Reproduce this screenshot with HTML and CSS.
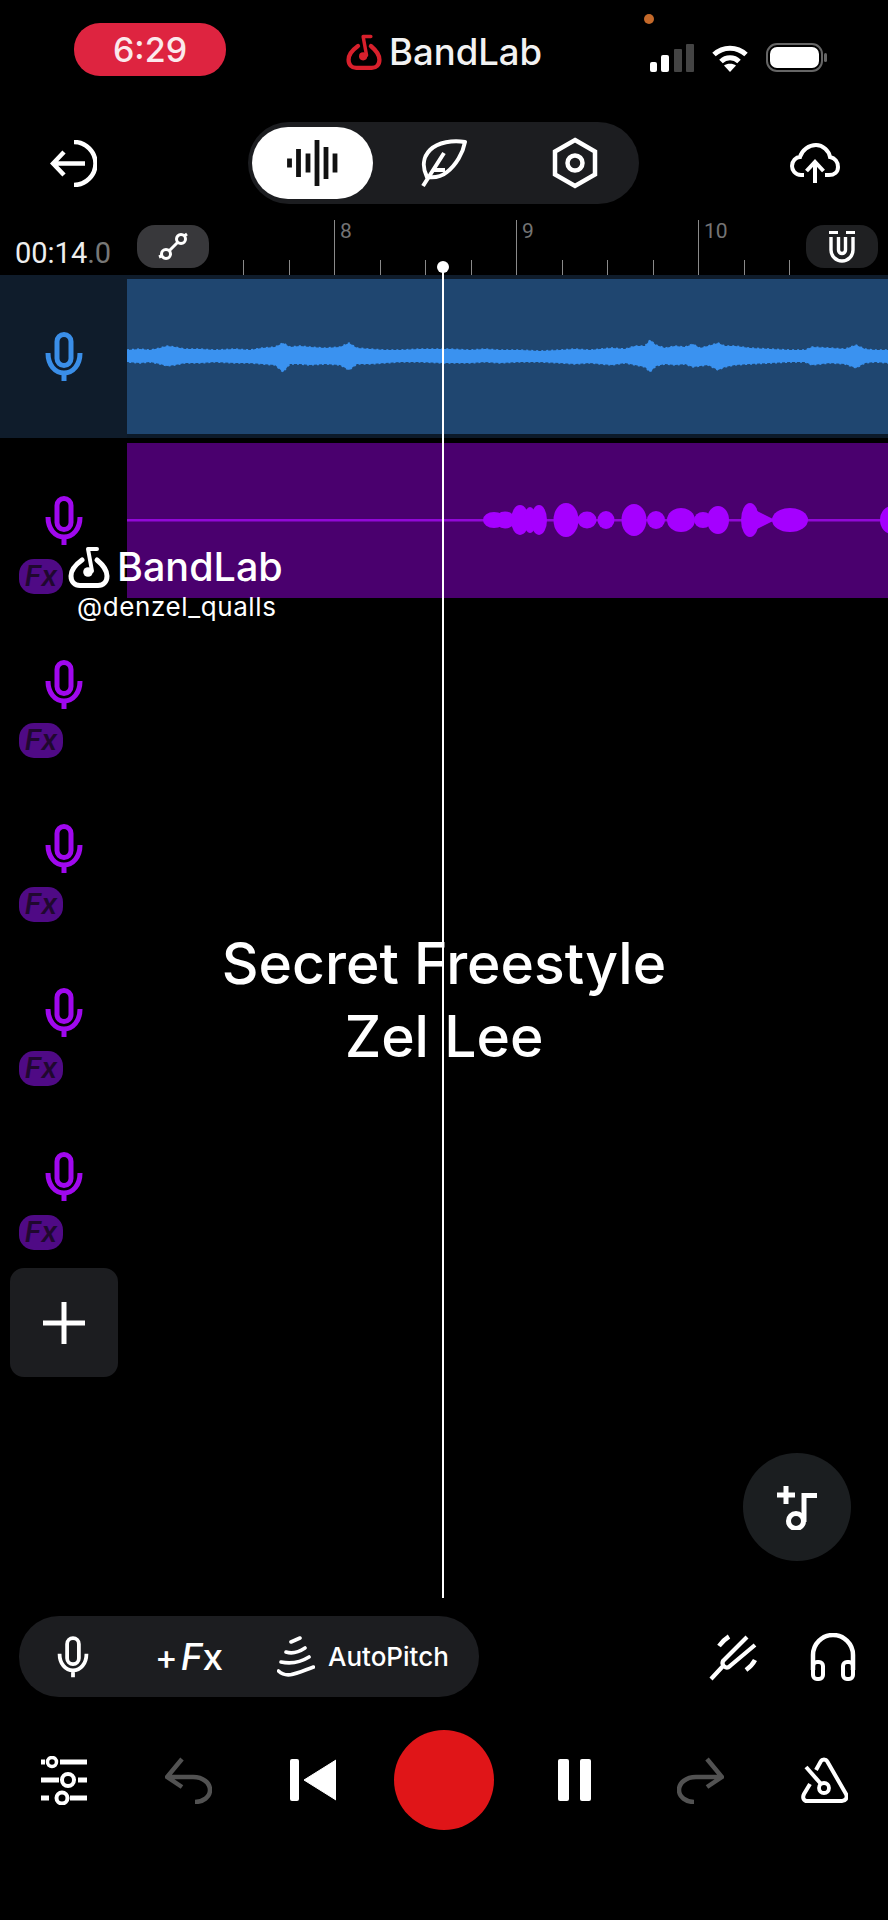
FILE: index.html
```html
<!DOCTYPE html>
<html lang="en">
<head>
  <meta charset="UTF-8">
  <title>BandLab Studio</title>
  <link rel="stylesheet" href="styles.css">
</head>
<body>
  <svg class="defs" width="0" height="0">
    <symbol id="mic" viewBox="0 0 38 50">
      <rect x="12" y="2.5" width="14" height="31" rx="7" fill="none" stroke="currentColor"/>
      <path d="M3 21C3 33 10 41 19 41C28 41 35 33 35 21M19 41V49" fill="none" stroke="currentColor"/>
    </symbol>
    <symbol id="logo" viewBox="0 0 42 42">
      <path d="M14 14C7 19 3 25 3 30C3 36 7 39.5 12 39.5H30C35 39.5 39 36 39 30C39 24 35 19 29 14" fill="none" stroke="currentColor" stroke-width="5" stroke-linecap="round"/>
      <path d="M20 3H29M20 3L24 25" fill="none" stroke="currentColor" stroke-width="4" stroke-linecap="round"/>
      <circle cx="20" cy="26" r="4.8" fill="currentColor"/>
    </symbol>
    <symbol id="undo" viewBox="0 0 47 47">
      <path d="M17 2L2 20L17 30M2 20H28C38 20 45 26 45 33C45 40 38 45 30 45" fill="none" stroke="currentColor" stroke-width="4.5"/>
    </symbol>
  </svg>

  <header class="status-bar">
    <div class="clock-pill">6:29</div>
    <div class="brand">
      <svg class="brand-mark"><use href="#logo"/></svg>
      <span>BandLab</span>
    </div>
    <div class="status-icons">
      <svg width="44" height="28" viewBox="0 0 44 28">
        <rect x="0" y="18" width="7" height="10" rx="2" fill="#fff"/>
        <rect x="11" y="11" width="8" height="17" rx="2" fill="#fff"/>
        <rect x="24" y="5" width="8" height="23" rx="1" fill="#444"/>
        <rect x="36" y="0" width="8" height="28" rx="1" fill="#444"/>
      </svg>
      <svg width="38" height="28" viewBox="0 0 38 28">
        <path d="M3 10.5C12 2 26 2 35 10.5M10 17.5C15 12.5 23 12.5 28 17.5" fill="none" stroke="#fff" stroke-width="5"/>
        <path d="M19 28L13 21.5C16 19 22 19 25 21.5Z" fill="#fff"/>
      </svg>
      <svg width="61" height="29" viewBox="0 0 61 29">
        <rect x="1" y="1" width="55" height="27" rx="10" fill="none" stroke="#666" stroke-width="2"/>
        <rect x="4" y="4" width="49" height="21" rx="7" fill="#fff"/>
        <rect x="58" y="10" width="3" height="9" rx="1.5" fill="#666"/>
      </svg>
    </div>
    <i class="mic-dot"></i>
  </header>

  <nav class="toolbar">
    <svg class="exit-icon" viewBox="0 0 47 47">
      <path d="M24 2A21.5 21.5 0 0 1 24 45" fill="none" stroke="#fff" stroke-width="4.5"/>
      <path d="M3 23.5H35M14 12L3 23.5L14 35" fill="none" stroke="#fff" stroke-width="4.5"/>
    </svg>
    <div class="view-switch">
      <div class="view-item active">
        <svg width="52" height="46" viewBox="0 0 52 46">
          <path d="M2.5 18.5V27.5M11.5 9V37M21 13.5V32.5M30 0V46M39 7V39M48 13.5V32.5" stroke="#111" stroke-width="4.8"/>
        </svg>
      </div>
      <div class="view-item">
        <svg width="46" height="49" viewBox="0 0 46 49">
          <path d="M44 3C32 1 17 3 9 11C2 18 1 28 6 38C13 39 20 38 26 33C35 26 42 14 44 3Z" fill="none" stroke="#fff" stroke-width="4" stroke-linejoin="round"/>
          <path d="M2 47L23 14M12 31H24" fill="none" stroke="#fff" stroke-width="4"/>
        </svg>
      </div>
      <div class="view-item">
        <svg width="46" height="52" viewBox="0 0 46 52">
          <path d="M23 3L43 14.5V37.5L23 49L3 37.5V14.5Z" fill="none" stroke="#fff" stroke-width="4.5"/>
          <circle cx="23" cy="26" r="7.5" fill="none" stroke="#fff" stroke-width="4.5"/>
        </svg>
      </div>
    </div>
    <svg class="cloud-icon" viewBox="0 0 50 40">
      <path d="M14 32H11C5 32 2 27 2 23C2 18 6 14 10 14C12 7 19 2 26 2C33 2 39 8 40 14C45 15 48 19 48 24C48 29 44 32 39 32H35" fill="none" stroke="#fff" stroke-width="4"/>
      <path d="M25 40V20M16.5 28L25 19L33.5 28" fill="none" stroke="#fff" stroke-width="4"/>
    </svg>
  </nav>

  <section class="timeline-bar">
    <div class="time">00:14<span>.0</span></div>
    <div class="chip">
      <svg width="32" height="32" viewBox="0 0 32 32">
        <circle cx="9" cy="23" r="4.5" fill="none" stroke="#fff" stroke-width="3"/>
        <circle cx="24" cy="8" r="4.5" fill="none" stroke="#fff" stroke-width="3"/>
        <path d="M12 20L21 11M2 26L5.5 24.5M27 5L30 3" stroke="#fff" stroke-width="3"/>
      </svg>
    </div>
    <div class="ruler">
      <i class="tick"></i><i class="tick"></i>
      <i class="tick major"><b>8</b></i><i class="tick"></i><i class="tick"></i><i class="tick"></i>
      <i class="tick major"><b>9</b></i><i class="tick"></i><i class="tick"></i><i class="tick"></i>
      <i class="tick major"><b>10</b></i><i class="tick"></i><i class="tick"></i>
    </div>
    <div class="chip magnet">
      <svg width="28" height="32" viewBox="0 0 28 32">
        <path d="M1 1.5H10M18 1.5H27" stroke="#fff" stroke-width="3"/>
        <path d="M3 6V19A11 11 0 0 0 25 19V6M10.5 6V19A3.5 3.5 0 0 0 17.5 19V6" fill="none" stroke="#fff" stroke-width="3.4"/>
      </svg>
    </div>
  </section>

  <main class="tracks">
    <div class="track track-blue">
      <div class="track-head">
        <svg class="mic"><use href="#mic"/></svg>
      </div>
      <div class="clip">
        <svg class="wave" viewBox="127 0 761 155" preserveAspectRatio="none">
          <path class="wave-blue" d="M127 71L140 70L150 71L160 69L167 67L175 68L185 70L200 70L215 71L235 70L250 71L262 69L275 68L283 64L290 68L300 67L310 68L325 69L340 68L349 64L357 69L370 70L385 71L400 71L420 70L443 70L450 70L470 71L485 70L500 71L520 71L540 72L560 71L575 70L590 71L600 70L612 69L625 70L635 67L645 67L650 61L656 66L665 69L675 67L685 68L693 65L700 69L708 67L718 64L725 67L735 67L750 69L770 70L790 71L805 71L812 68L830 69L845 70L856 66L865 70L875 71L888 71V84L875 83L865 84L856 89L845 85L830 84L812 86L805 83L790 83L770 84L750 85L735 86L725 88L718 91L708 86L700 87L693 88L685 85L675 86L665 85L656 87L650 93L645 88L635 86L625 84L612 86L600 85L590 84L575 85L560 84L540 83L520 83L500 84L485 83L470 84L450 84L443 84L420 83L400 83L385 84L370 85L357 85L349 91L340 86L325 85L310 86L300 85L290 85L283 93L275 86L262 85L250 84L235 84L215 83L200 84L185 84L175 86L167 87L160 85L150 83L140 84L127 83Z"/>
        </svg>
      </div>
    </div>

    <div class="track">
      <div class="track-head">
        <svg class="mic purple"><use href="#mic"/></svg>
        <div class="fx-chip">Fx</div>
      </div>
      <div class="clip clip-purple">
        <svg class="wave" viewBox="127 0 761 155" preserveAspectRatio="none">
          <rect x="127" y="76" width="761" height="2.5" fill="#9208d8"/>
          <g fill="#a500ff">
            <ellipse cx="494" cy="77" rx="11" ry="8"/>
            <ellipse cx="505" cy="77" rx="10" ry="8.5"/>
            <ellipse cx="520" cy="77" rx="9" ry="15"/>
            <ellipse cx="530" cy="77" rx="6" ry="13"/>
            <ellipse cx="539" cy="77" rx="8" ry="15"/>
            <ellipse cx="566" cy="77" rx="12.5" ry="17"/>
            <ellipse cx="587" cy="77" rx="9.5" ry="8.5"/>
            <ellipse cx="606" cy="77" rx="8.5" ry="9"/>
            <ellipse cx="634" cy="77" rx="12.5" ry="16"/>
            <ellipse cx="656" cy="77" rx="9" ry="9"/>
            <ellipse cx="681" cy="77" rx="14" ry="12"/>
            <ellipse cx="703" cy="77" rx="9" ry="8"/>
            <ellipse cx="718" cy="77" rx="11" ry="14"/>
            <ellipse cx="750" cy="77" rx="9" ry="17"/>
            <path d="M753 66L775 77L753 88Z"/>
            <ellipse cx="790" cy="77" rx="18" ry="12"/>
            <ellipse cx="892" cy="77" rx="12" ry="14"/>
          </g>
        </svg>
      </div>
    </div>

    <div class="track">
      <div class="track-head">
        <svg class="mic purple"><use href="#mic"/></svg>
        <div class="fx-chip">Fx</div>
      </div>
    </div>
    <div class="track">
      <div class="track-head">
        <svg class="mic purple"><use href="#mic"/></svg>
        <div class="fx-chip">Fx</div>
      </div>
    </div>
    <div class="track">
      <div class="track-head">
        <svg class="mic purple"><use href="#mic"/></svg>
        <div class="fx-chip">Fx</div>
      </div>
    </div>
    <div class="track">
      <div class="track-head">
        <svg class="mic purple"><use href="#mic"/></svg>
        <div class="fx-chip">Fx</div>
      </div>
    </div>

    <div class="add-track">
      <svg width="42" height="42" viewBox="0 0 42 42">
        <path d="M21 0V42M0 21H42" stroke="#fff" stroke-width="5"/>
      </svg>
    </div>
  </main>

  <section class="tools">
    <div class="tool-pill">
      <svg class="tool-mic"><use href="#mic"/></svg>
      <div class="add-fx"><span>+</span><em>F</em>x</div>
      <div class="autopitch">
        <svg width="38" height="41" viewBox="0 0 38 41">
          <path d="M14 6L23 2M9 16C15 18 22 16 28 12M4 26C14 28 24 26 32 21M1.5 35C10 43 20 37 36.5 31" fill="none" stroke="#fff" stroke-width="3.6" stroke-linecap="round"/>
        </svg>
        <span>AutoPitch</span>
      </div>
    </div>
    <div class="tool-right">
      <svg width="48" height="48" viewBox="0 0 48 48">
        <path d="M2 46L15 32M38 4L14 28C12 32 17 37 21 33L46 12" fill="none" stroke="#fff" stroke-width="4.2"/>
        <path d="M10 13C13 9 16 6 20 3.5M37 37C41 34 44 31 46 27" fill="none" stroke="#fff" stroke-width="4.5"/>
      </svg>
      <svg width="46" height="48" viewBox="0 0 46 48">
        <path d="M3 37V22A20 20 0 0 1 43 22V37" fill="none" stroke="#fff" stroke-width="4.5"/>
        <rect x="3" y="29" width="10" height="17" rx="4" fill="none" stroke="#fff" stroke-width="4"/>
        <rect x="33" y="29" width="10" height="17" rx="4" fill="none" stroke="#fff" stroke-width="4"/>
      </svg>
    </div>
  </section>

  <footer class="transport">
    <svg width="46" height="49" viewBox="0 0 46 49">
      <path d="M0 6H4M19 6H46M0 24H18M37 24H46M0 42H8M29 42H46" stroke="#fff" stroke-width="5"/>
      <circle cx="11" cy="6" r="4.5" fill="none" stroke="#fff" stroke-width="3.5"/>
      <circle cx="27" cy="24" r="6" fill="none" stroke="#fff" stroke-width="4"/>
      <circle cx="21" cy="42" r="5.5" fill="none" stroke="#fff" stroke-width="4"/>
    </svg>
    <svg class="undo"><use href="#undo"/></svg>
    <svg width="46" height="42" viewBox="0 0 46 42">
      <rect x="0" y="0" width="9" height="42" rx="2" fill="#fff"/>
      <path d="M46 1V41L14 21Z" fill="#fff" stroke="#fff" stroke-linejoin="round"/>
    </svg>
    <div class="record"></div>
    <div class="pause"><i></i><i></i></div>
    <svg class="undo redo"><use href="#undo"/></svg>
    <svg class="metronome" width="47" height="46" viewBox="0 0 47 46">
      <path d="M15 13L20 4C21 2 25 2 26 4L45 37C47 41 44 44 41 44H6C3 44 1 41 3 37L9 27" fill="none" stroke="#fff" stroke-width="4" stroke-linejoin="round"/>
      <path d="M5 10L20 27" stroke="#fff" stroke-width="4"/>
      <circle cx="23" cy="31" r="5" fill="none" stroke="#fff" stroke-width="3.8"/>
    </svg>
  </footer>

  <!-- things that sit on top of the tracks -->
  <div class="playhead"></div>

  <div class="watermark">
    <div class="watermark-brand">
      <svg class="watermark-mark"><use href="#logo"/></svg>
      <span>BandLab</span>
    </div>
    <div class="watermark-user">@denzel_qualls</div>
  </div>

  <div class="song-title">Secret Freestyle<br>Zel Lee</div>

  <div class="add-music">
    <svg width="40" height="46" viewBox="0 0 40 46">
      <path d="M0 11H18M9 2V20" stroke="#fff" stroke-width="5"/>
      <circle cx="19" cy="37" r="7.5" fill="none" stroke="#fff" stroke-width="5"/>
      <path d="M27 38V11.5H40" fill="none" stroke="#fff" stroke-width="5"/>
    </svg>
  </div>
</body>
</html>
```

FILE: styles.css
```css
* {
  box-sizing: border-box;
}
html, body {
  margin: 0;
  height: 1920px;
}
body {
  position: relative;
  width: 888px;
  background-color: #000;
  color: #fff;
  font-family: Inter, Roboto, sans-serif;
  display: flex;
  flex-direction: column;
  overflow: hidden;
}
svg {
  display: block;
  flex: none;
}
.defs {
  position: absolute;
}

/* status bar */
.status-bar {
  display: flex;
  align-items: flex-start;
  height: 76px;
  padding: 23px 61px 0 74px;
}
.clock-pill {
  width: 152px;
  height: 53px;
  border-radius: 26px;
  background-color: #de2440;
  font-size: 34px;
  font-weight: 500;
  line-height: 53px;
  text-align: center;
  color: #fbe9ec;
}
.brand {
  display: flex;
  align-items: center;
  gap: 7px;
  margin: 10px 0 0 120px;
  font-size: 36.5px;
  font-weight: 500;
  line-height: 38px;
  color: #f2f2f2;
}
.brand-mark {
  width: 36px;
  height: 38px;
  color: #d8202c;
}
.status-icons {
  display: flex;
  align-items: center;
  gap: 17px;
  margin: 20px 0 0 auto;
}
.mic-dot {
  position: absolute;
  left: 644px;
  top: 14px;
  width: 10px;
  height: 10px;
  border-radius: 50%;
  background-color: #c4692a;
}

/* toolbar */
.toolbar {
  display: flex;
  align-items: center;
  justify-content: space-between;
  margin-top: 46px;
  padding: 0 48px 0 50px;
}
.exit-icon {
  width: 47px;
  height: 47px;
}
.cloud-icon {
  width: 50px;
  height: 40px;
}
.view-switch {
  display: flex;
  gap: 10px;
  height: 82px;
  padding: 5px 4px;
  border-radius: 41px;
  background-color: #1c1d20;
}
.view-item {
  display: flex;
  align-items: center;
  justify-content: center;
  width: 121px;
  border-radius: 36px;
}
.view-item.active {
  background-color: #fff;
}

/* time + ruler */
.timeline-bar {
  display: flex;
  align-items: flex-end;
  height: 55px;
  margin-top: 16px;
  padding: 0 10px 0 15px;
}
.time {
  width: 122px;
  align-self: center;
  margin-top: 10px;
  font-family: Roboto, sans-serif;
  font-size: 29px;
  color: #eee;
}
.time span {
  color: #777;
}
.chip {
  display: flex;
  align-items: center;
  justify-content: center;
  width: 72px;
  height: 43px;
  margin-bottom: 7px;
  border-radius: 18px;
  background-color: #38383b;
}
.chip.magnet {
  background-color: #1f2022;
}
.ruler {
  display: flex;
  align-items: flex-end;
  flex: 1;
  height: 55px;
  margin-left: 34px;
  overflow: hidden;
}
.tick {
  position: relative;
  flex: 0 0 45.5px;
  height: 15px;
  border-left: 1px solid #8a8a8a;
}
.tick.major {
  height: 55px;
}
.tick b {
  position: absolute;
  left: 5px;
  top: -1px;
  font-family: Roboto, sans-serif;
  font-size: 21px;
  font-style: normal;
  font-weight: 400;
  color: #747474;
}

/* tracks */
.track {
  display: flex;
  height: 164px;
}
.track-blue {
  height: 163px;
  background-color: #0f1c2b;
}
.track-head {
  display: flex;
  flex-direction: column;
  flex: 0 0 127px;
  padding: 58px 0 0 19px;
}
.track-blue .track-head {
  padding-top: 57px;
}
.mic {
  width: 38px;
  height: 50px;
  margin-left: 26px;
  color: #3a8ee8;
  stroke-width: 5;
}
.mic.purple {
  color: #a008ee;
}
.fx-chip {
  width: 44px;
  height: 35px;
  margin-top: 13px;
  border-radius: 15px;
  background-color: #4f0a85;
  font-size: 28px;
  font-style: italic;
  font-weight: 600;
  line-height: 35px;
  text-align: center;
  color: #20082f;
}
.clip {
  flex: 1;
  margin: 4px 0;
  background-color: #1f4670;
  box-shadow: 0 4px 0 #0c1a29;
}
.clip-purple {
  margin: 5px 0 4px;
  background-color: #4a006e;
  box-shadow: none;
}
.wave {
  width: 100%;
  height: 100%;
}
.wave-blue {
  fill: #3a92f0;
  stroke: #3a92f0;
  stroke-width: 1.5;
  stroke-dasharray: 2 3;
}
.add-track {
  display: flex;
  align-items: center;
  justify-content: center;
  width: 108px;
  height: 109px;
  margin: 10px 0 0 10px;
  border-radius: 14px;
  background-color: #1c1d20;
}

/* tools row */
.tools {
  display: flex;
  align-items: center;
  justify-content: space-between;
  margin-top: auto;
  padding: 0 32px 0 19px;
}
.tool-pill {
  display: flex;
  align-items: center;
  width: 460px;
  height: 81px;
  padding-left: 38px;
  border-radius: 40px;
  background-color: #1c1d20;
}
.tool-mic {
  width: 32px;
  height: 42px;
  color: #fff;
  stroke-width: 4.5;
}
.add-fx {
  display: flex;
  align-items: center;
  width: 67px;
  margin-left: 66px;
  font-size: 37px;
  font-weight: 500;
}
.add-fx span {
  margin-right: 3px;
  font-size: 34px;
}
.autopitch {
  display: flex;
  align-items: center;
  gap: 13px;
  margin-left: 55px;
  font-size: 26px;
  font-weight: 500;
}
.tool-right {
  display: flex;
  align-items: center;
  gap: 53px;
}

/* transport */
.transport {
  display: flex;
  align-items: center;
  gap: 78px;
  height: 100px;
  margin: 33px 0 90px;
  padding-left: 41px;
}
.undo {
  width: 47px;
  height: 47px;
  color: #525252;
}
.redo {
  margin-left: 8px;
  transform: scaleX(-1);
}
.metronome {
  margin-left: -1px;
}
.record {
  width: 100px;
  height: 100px;
  margin-left: -20px;
  border-radius: 50%;
  background-color: #e01518;
}
.pause {
  display: flex;
  gap: 11px;
  margin-left: -14px;
}
.pause i {
  width: 11px;
  height: 42px;
  border-radius: 2px;
  background-color: #fff;
}

/* overlays */
.playhead {
  position: absolute;
  left: 442px;
  top: 267px;
  width: 2px;
  height: 1331px;
  background-color: #fff;
}
.playhead::before {
  content: "";
  position: absolute;
  left: -5px;
  top: -6px;
  width: 12px;
  height: 12px;
  border-radius: 50%;
  background-color: #fff;
}
.watermark {
  position: absolute;
  left: 68px;
  top: 546px;
}
.watermark-brand {
  display: flex;
  align-items: center;
  gap: 7px;
  font-size: 39.5px;
  font-weight: 500;
  line-height: 42px;
}
.watermark-mark {
  width: 42px;
  height: 42px;
}
.watermark-user {
  margin: 4px 0 0 9px;
  font-size: 26px;
  font-weight: 400;
  letter-spacing: 0.6px;
  line-height: 30px;
}
.song-title {
  position: absolute;
  left: 0;
  right: 0;
  top: 927px;
  font-size: 57px;
  font-weight: 500;
  line-height: 73px;
  text-align: center;
}
.add-music {
  position: absolute;
  left: 743px;
  top: 1453px;
  display: flex;
  align-items: center;
  justify-content: center;
  width: 108px;
  height: 108px;
  border-radius: 50%;
  background-color: #1b1e20;
}
```
